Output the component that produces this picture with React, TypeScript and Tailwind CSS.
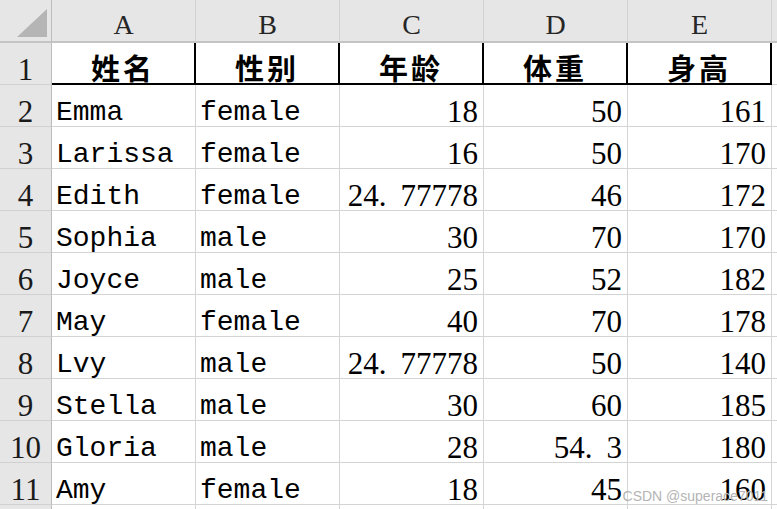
import React from 'react';

type Row = [string, string, string, string, string];

const columns = ['A', 'B', 'C', 'D', 'E'];
const headers = ['姓名', '性别', '年龄', '体重', '身高'];

const rows: Row[] = [
  ['Emma', 'female', '18', '50', '161'],
  ['Larissa', 'female', '16', '50', '170'],
  ['Edith', 'female', '24.77778', '46', '172'],
  ['Sophia', 'male', '30', '70', '170'],
  ['Joyce', 'male', '25', '52', '182'],
  ['May', 'female', '40', '70', '178'],
  ['Lvy', 'male', '24.77778', '50', '140'],
  ['Stella', 'male', '30', '60', '185'],
  ['Gloria', 'male', '28', '54.3', '180'],
  ['Amy', 'female', '18', '45', '160'],
];

const cellFont = { fontFamily: '"Liberation Mono", monospace' };
const serif = { fontFamily: '"Liberation Serif", serif' };
const cjk = { fontFamily: '"Noto Sans CJK SC", sans-serif' };

// 半角句點在原表格字型中佔一個字寬
function NumText({ v }: { v: string }) {
  const [int, frac] = v.split('.');
  if (frac === undefined) return <>{v}</>;
  return (
    <>
      {int}
      <span className="inline-block w-[0.7em]">.</span>
      {frac}
    </>
  );
}

function RowHead({ n }: { n?: number }) {
  return (
    <div
      className="h-[42px] bg-[#e6e6e6] border-r border-r-[#bcbcbc] border-b border-b-[#d0d0d0] flex items-center justify-center text-[31px] text-[#1a1a1a] leading-none pt-[11px]"
      style={serif}
    >
      {n}
    </div>
  );
}

export default function App() {
  return (
    <div className="relative w-[777px] h-[509px] overflow-hidden bg-white">
      <div className="grid grid-cols-[52px_repeat(5,144px)_1fr]">
        {/* column header row */}
        <div className="h-[43px] bg-[#e6e6e6] border-r border-r-[#bcbcbc] border-b-2 border-b-[#c4c4c4] relative">
          <svg className="absolute left-[17px] top-[9px]" width="31" height="29" viewBox="0 0 31 29">
            <polygon points="30,0 30,28 0,28" fill="#b5b5b5" />
          </svg>
        </div>
        {columns.map((c) => (
          <div
            key={c}
            className="h-[43px] bg-[#e6e6e6] border-r border-r-[#d2d2d2] border-b-2 border-b-[#c4c4c4] flex items-center justify-center text-[28px] text-[#262626] leading-none pt-[8px]"
            style={serif}
          >
            {c}
          </div>
        ))}
        <div className="h-[43px] bg-[#e6e6e6] border-b-2 border-b-[#c4c4c4]" />

        {/* row 1: table header */}
        <RowHead n={1} />
        {headers.map((h) => (
          <div
            key={h}
            className="h-[42px] border-b-2 border-b-black border-r-2 border-r-black flex items-center justify-center pt-[8px] text-[29px] font-bold text-black tracking-[3px] leading-none"
            style={cjk}
          >
            {h}
          </div>
        ))}
        <div className="h-[42px] border-b border-b-[#d4d4d4]" />

        {/* data rows */}
        {rows.map((r, ri) => (
          <React.Fragment key={ri}>
            <RowHead n={ri + 2} />
            {r.map((v, ci) =>
              ci < 2 ? (
                <div
                  key={ci}
                  className="h-[42px] border-r border-r-[#d4d4d4] border-b border-b-[#d4d4d4] flex items-center justify-start pl-[4px] pt-[15px] text-[28px] leading-none text-black"
                  style={cellFont}
                >
                  {v}
                </div>
              ) : (
                <div
                  key={ci}
                  className="h-[42px] border-r border-r-[#d4d4d4] border-b border-b-[#d4d4d4] flex items-center justify-end pr-[5px] pt-[12px] text-[31px] leading-none text-black"
                  style={serif}
                >
                  <NumText v={v} />
                </div>
              )
            )}
            <div className="h-[42px] border-b border-b-[#d4d4d4]" />
          </React.Fragment>
        ))}

        {/* partial row 12 */}
        <RowHead />
        {columns.map((c) => (
          <div key={c} className="h-[42px] border-r border-r-[#d4d4d4]" />
        ))}
        <div />
      </div>
      <span
        className="absolute right-[9px] bottom-[6px] text-[14px] text-[#b4b4b4] leading-none"
        style={{ fontFamily: '"Liberation Sans", sans-serif' }}
      >
        CSDN @superace7011
      </span>
    </div>
  );
}
